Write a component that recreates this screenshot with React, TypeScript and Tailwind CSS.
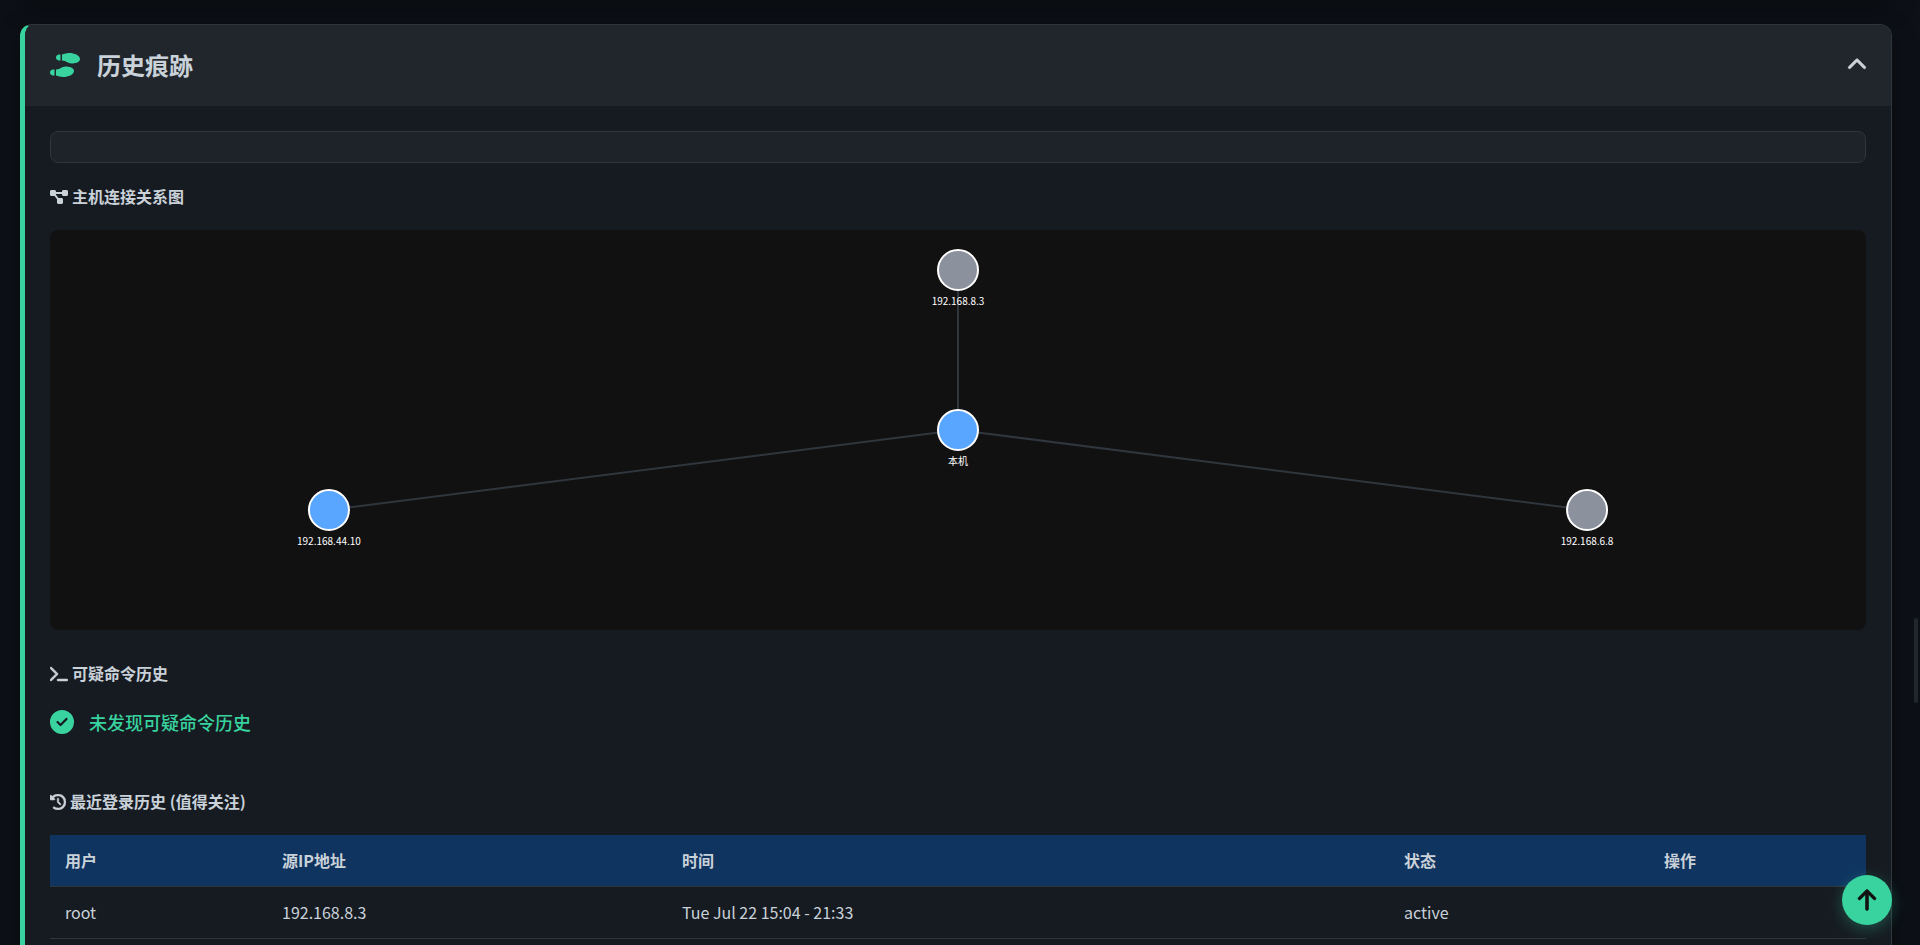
import React from "react";
import {
  FaArrowUp,
  FaChevronUp,
  FaCircleCheck,
  FaClockRotateLeft,
  FaDiagramProject,
  FaShoePrints,
  FaTerminal,
} from "react-icons/fa6";

type HostNode = {
  label: string;
  x: string;
  y: string;
  fill: string;
};

const center: HostNode = { label: "本机", x: "50%", y: "50%", fill: "#58a6ff" };

const hosts: HostNode[] = [
  { label: "192.168.8.3", x: "50%", y: "10%", fill: "#8b929e" },
  { label: "192.168.6.8", x: "84.64%", y: "70%", fill: "#8b929e" },
  { label: "192.168.44.10", x: "15.36%", y: "70%", fill: "#58a6ff" },
];

const logins = [
  { user: "root", ip: "192.168.8.3", time: "Tue Jul 22 15:04 - 21:33", status: "active" },
];

const HostGraph = () => {
  return (
    <svg className="block h-[400px] w-full rounded-lg bg-[#111111]">
      {hosts.map((host) => (
        <line
          key={host.label}
          x1={center.x}
          y1={center.y}
          x2={host.x}
          y2={host.y}
          stroke="#30363d"
          strokeWidth={2}
        />
      ))}
      {[center, ...hosts].map((node) => (
        <g key={node.label}>
          <circle cx={node.x} cy={node.y} r={20} fill={node.fill} stroke="#fff" strokeWidth={2} />
          <text x={node.x} y={node.y} dy={35} textAnchor="middle" className="fill-white text-[10px]">
            {node.label}
          </text>
        </g>
      ))}
    </svg>
  );
};

type HeadingProps = {
  icon: React.ReactNode;
  children: React.ReactNode;
};

const Heading = ({ icon, children }: HeadingProps) => {
  return (
    <h4 className="my-5 flex items-center gap-1 text-base leading-[27px] font-bold">
      {icon}
      {children}
    </h4>
  );
};

const App = () => {
  return (
    <div className="h-screen overflow-hidden bg-[#0d1117] pr-7 pl-5 font-['Noto_Sans_CJK_SC',sans-serif] text-[#c9d1d9]">
      {/* end of the card above, only its shadow shows */}
      <div className="-mt-6 mb-6 h-6 rounded-b-xl bg-[#161b22] shadow-[0_8px_24px_rgba(0,0,0,0.4)]"></div>

      <section className="min-h-full overflow-hidden rounded-xl border border-l-[5px] border-[#30363d] border-l-[#38d39f] bg-[#161b22] shadow-[0_8px_24px_rgba(0,0,0,0.4)]">
        <header className="flex items-center justify-between bg-[#21262d] px-6 pt-[19px] pb-[21px]">
          <h2 className="flex items-center gap-[17px] pl-px text-2xl leading-[41px] font-bold">
            <FaShoePrints className="h-6 w-[30px] text-[#38d39f]" />
            历史痕跡
          </h2>
          <button type="button" aria-label="收起">
            <FaChevronUp className="size-5 stroke-[16]" />
          </button>
        </header>

        <div className="p-[25px]">
          <div className="h-8 rounded-lg border border-[#30363d] bg-[#1e2229]"></div>

          <Heading icon={<FaDiagramProject className="h-4 w-[18px]" />}>主机连接关系图</Heading>
          <HostGraph />

          <div className="pt-[10px]">
            <Heading icon={<FaTerminal className="h-4 w-[18px] stroke-[16]" />}>可疑命令历史</Heading>
            <p className="flex items-center gap-[15px] pb-[31px] text-lg leading-[30px] font-medium text-[#38d39f]">
              <FaCircleCheck className="size-6" />
              未发现可疑命令历史
            </p>
          </div>

          <Heading icon={<FaClockRotateLeft className="size-4 stroke-[16]" />}>
            最近登录历史 (值得关注)
          </Heading>
          <table className="w-full table-fixed border-collapse text-left text-base leading-[27px]">
            <thead>
              <tr className="border-b border-[#30363d] bg-[#0f3460]">
                <th className="w-[217px] px-[15px] py-3">用户</th>
                <th className="w-[400px] px-[15px] py-3">源IP地址</th>
                <th className="px-[15px] py-3">时间</th>
                <th className="w-[260px] px-[15px] py-3">状态</th>
                <th className="w-[217px] px-[15px] py-3">操作</th>
              </tr>
            </thead>
            <tbody>
              {logins.map((login) => (
                <tr key={login.time} className="border-b border-[#30363d]">
                  <td className="px-[15px] py-3">{login.user}</td>
                  <td className="px-[15px] py-3">{login.ip}</td>
                  <td className="px-[15px] py-3">{login.time}</td>
                  <td className="px-[15px] py-3">{login.status}</td>
                  <td className="px-[15px] py-3"></td>
                </tr>
              ))}
            </tbody>
          </table>
        </div>
      </section>

      <button
        type="button"
        aria-label="回到顶部"
        className="fixed right-7 bottom-5 flex size-[50px] items-center justify-center rounded-full bg-[#38d39f] text-[#111111] shadow-[0_4px_15px_rgba(56,211,159,0.3)]"
      >
        <FaArrowUp className="size-6 stroke-[12]" />
      </button>

      {/* scroll thumb */}
      <div className="fixed top-[618px] right-0.5 h-[85px] w-1 rounded-full bg-[#21262d]"></div>
    </div>
  );
};

export default App;
